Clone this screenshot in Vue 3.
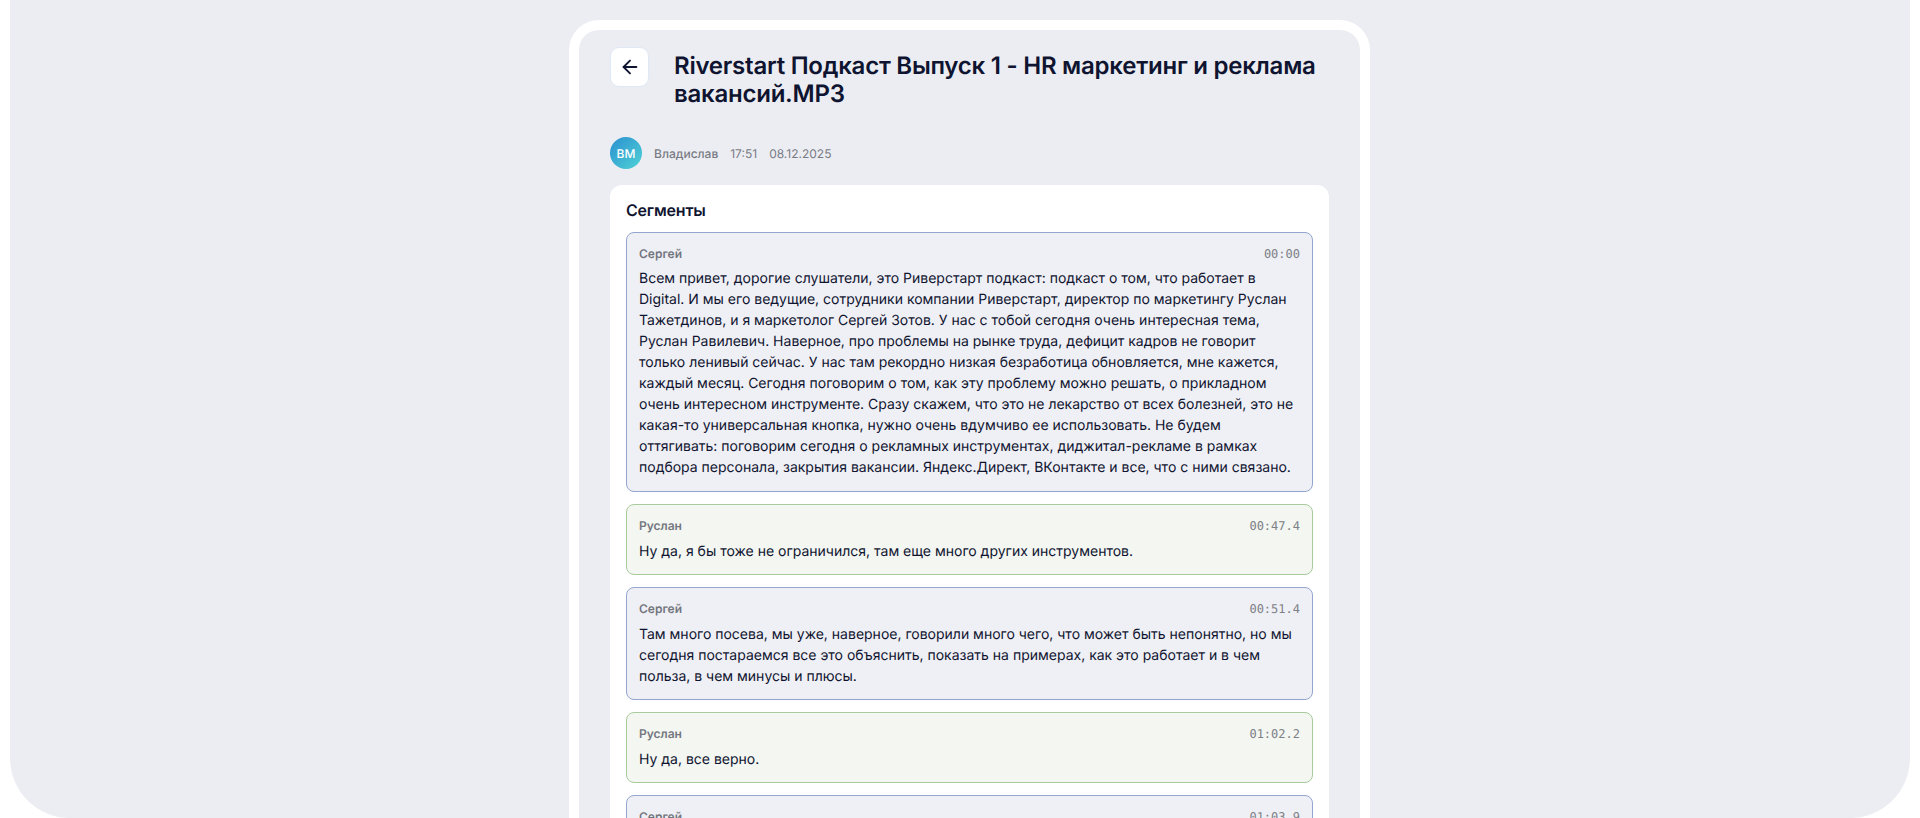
<script setup>
const segments = [
  {
    speaker: 'Сергей',
    time: '00:00',
    side: 'a',
    text: 'Всем привет, дорогие слушатели, это Риверстарт подкаст: подкаст о том, что работает в Digital. И мы его ведущие, сотрудники компании Риверстарт, директор по маркетингу Руслан Тажетдинов, и я маркетолог Сергей Зотов. У нас с тобой сегодня очень интересная тема, Руслан Равилевич. Наверное, про проблемы на рынке труда, дефицит кадров не говорит только ленивый сейчас. У нас там рекордно низкая безработица обновляется, мне кажется, каждый месяц. Сегодня поговорим о том, как эту проблему можно решать, о прикладном очень интересном инструменте. Сразу скажем, что это не лекарство от всех болезней, это не какая-то универсальная кнопка, нужно очень вдумчиво ее использовать. Не будем оттягивать: поговорим сегодня о рекламных инструментах, диджитал-рекламе в рамках подбора персонала, закрытия вакансии. Яндекс.Директ, ВКонтакте и все, что с ними связано.',
  },
  { speaker: 'Руслан', time: '00:47.4', side: 'b', text: 'Ну да, я бы тоже не ограничился, там еще много других инструментов.' },
  {
    speaker: 'Сергей',
    time: '00:51.4',
    side: 'a',
    text: 'Там много посева, мы уже, наверное, говорили много чего, что может быть непонятно, но мы сегодня постараемся все это объяснить, показать на примерах, как это работает и в чем польза, в чем минусы и плюсы.',
  },
  { speaker: 'Руслан', time: '01:02.2', side: 'b', text: 'Ну да, все верно.' },
  { speaker: 'Сергей', time: '01:03.9', side: 'a', text: '' },
]
</script>

<template>
  <div class="page">
    <main class="shell">
      <section class="frame">
        <header class="head">
          <button class="back" type="button" aria-label="Назад">
            <svg width="22" height="22" viewBox="0 0 24 24" fill="none" stroke="#0f1430" stroke-width="2" stroke-linecap="round" stroke-linejoin="round">
              <path d="M19 12H5" />
              <path d="M12 19l-7-7 7-7" />
            </svg>
          </button>
          <h1>Riverstart Подкаст Выпуск 1 - HR маркетинг и реклама вакансий.MP3</h1>
        </header>

        <div class="meta">
          <span class="avatar">ВМ</span>
          <span class="author">Владислав</span>
          <span>17:51</span>
          <span>08.12.2025</span>
        </div>

        <div class="card">
          <h2>Сегменты</h2>
          <div class="list">
            <article v-for="seg in segments" :key="seg.time" class="segment" :class="seg.side">
              <div class="top">
                <span class="speaker">{{ seg.speaker }}</span>
                <span class="time">{{ seg.time }}</span>
              </div>
              <p v-if="seg.text">{{ seg.text }}</p>
            </article>
          </div>
        </div>
      </section>
    </main>
  </div>
</template>

<style>
html, body {
  margin: 0;
  background: #fff;
  overflow: hidden;
}
</style>

<style scoped>
.page {
  height: 100vh;
  padding: 0 10px;
  box-sizing: border-box;
  font-family: Inter, "Noto Sans", sans-serif;
  text-rendering: geometricPrecision;
  color: #0f1430;
}
.shell {
  height: 100%;
  background: #ecedf2;
  border-radius: 0 0 60px 60px;
  padding: 20px 0 0 19px;
  box-sizing: border-box;
  overflow: hidden;
  display: flex;
  justify-content: center;
}
.frame {
  width: 801px;
  flex: none;
  box-sizing: border-box;
  border: 10px solid #fff;
  border-bottom: 0;
  border-radius: 30px 30px 0 0;
  padding: 17px 31px 0;
  background: #ecedf2;
}
.head {
  display: flex;
  align-items: flex-start;
  gap: 25px;
}
.back {
  flex: none;
  width: 39px;
  height: 40px;
  padding: 0;
  display: flex;
  align-items: center;
  justify-content: center;
  background: #fff;
  border: 1px solid #dfe8f5;
  border-radius: 9px;
}
h1 {
  margin: 0;
  padding-top: 5px;
  font-size: 24px;
  line-height: 28px;
  letter-spacing: -0.24px;
  font-weight: 600;
  color: #0f1430;
}
.meta {
  display: flex;
  align-items: center;
  gap: 12px;
  margin-top: 29px;
  font-size: 12px;
  color: #787b84;
}
.avatar {
  width: 32px;
  height: 32px;
  border-radius: 50%;
  display: flex;
  align-items: center;
  justify-content: center;
  background: linear-gradient(135deg, #2b8fd0, #4fd3d6);
  color: #fff;
  font-size: 12px;
  font-weight: 500;
}
.author {
  font-weight: 500;
}
.card {
  margin-top: 16px;
  background: #fff;
  border-radius: 12px;
  padding: 15px 16px 16px;
}
h2 {
  margin: 0 0 12px;
  font-size: 16px;
  line-height: 20px;
  letter-spacing: -0.2px;
  font-weight: 600;
  color: #0f1430;
}
.list {
  display: flex;
  flex-direction: column;
  gap: 12px;
}
.segment {
  border: 1px solid;
  border-radius: 8px;
  padding: 13px 12px 12px;
}
.segment:first-child {
  padding-bottom: 13px;
}
.segment.a {
  background: #eff0f5;
  border-color: #93a6cf;
}
.segment.b {
  background: #f3f6f1;
  border-color: #a8cb9b;
}
.top {
  display: flex;
  justify-content: space-between;
  align-items: center;
  margin-bottom: 7px;
  font-size: 12px;
  line-height: 16px;
  color: #73767f;
}
.segment:first-child .top {
  margin-bottom: 6px;
}
.speaker {
  font-weight: 600;
}
.time {
  font-family: "DejaVu Sans Mono", monospace;
  color: #7d8087;
}
p {
  margin: 0;
  font-size: 14px;
  line-height: 21px;
  color: #0f1430;
}
</style>
